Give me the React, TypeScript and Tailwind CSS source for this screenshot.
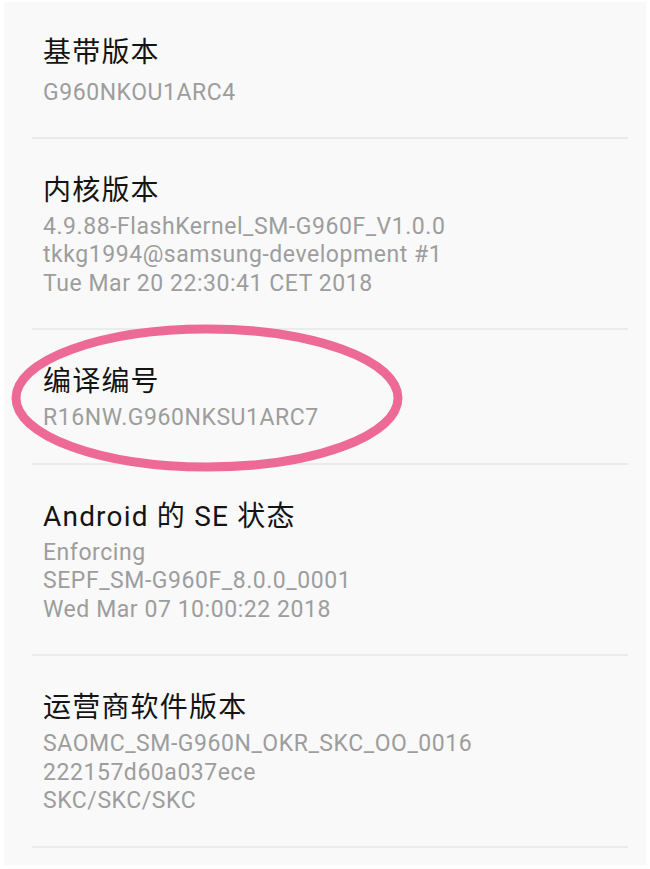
import React from "react";

type Item = { title: string; values: string[] };

const items: Item[] = [
  { title: "基带版本", values: ["G960NKOU1ARC4"] },
  {
    title: "内核版本",
    values: [
      "4.9.88-FlashKernel_SM-G960F_V1.0.0",
      "tkkg1994@samsung-development #1",
      "Tue Mar 20 22:30:41 CET 2018",
    ],
  },
  { title: "编译编号", values: ["R16NW.G960NKSU1ARC7"] },
  {
    title: "Android 的 SE 状态",
    values: ["Enforcing", "SEPF_SM-G960F_8.0.0_0001", "Wed Mar 07 10:00:22 2018"],
  },
  {
    title: "运营商软件版本",
    values: ["SAOMC_SM-G960N_OKR_SKC_OO_0016", "222157d60a037ece", "SKC/SKC/SKC"],
  },
];

export default function App() {
  return (
    <div
      className="w-[650px] h-[869px] bg-white overflow-hidden pt-[2px] px-[4px] pb-[4px]"
      style={{ fontFamily: 'Roboto, "Noto Sans CJK SC", sans-serif' }}
    >
      <div className="relative h-full bg-[#f9f9f9]">
        {items.map((it, i) => (
          <div key={i}>
            {i > 0 && <div className="ml-[28px] mr-[18px] h-[2px] bg-[#ebebeb]" />}
            <div className={`pl-[39px] ${i === 0 ? "pt-[33px] pb-[29px]" : "pt-[34px] pb-[30px]"}`}>
              <div className="text-[28px] leading-[36px] text-[#141414] tracking-[1.2px]">{it.title}</div>
              <div className={i === 0 ? "mt-[8px]" : "mt-[4px]"}>
                {it.values.map((v, j) => (
                  <div key={j} className="text-[23px] leading-[28.5px] text-[#9d9d9d] tracking-[0.55px]">
                    {v}
                  </div>
                ))}
              </div>
            </div>
          </div>
        ))}
        <div className="ml-[28px] mr-[18px] h-[2px] bg-[#ebebeb]" />
        <svg className="absolute left-[-4px] top-[-2px] pointer-events-none" width="650" height="869">
          <ellipse cx="207" cy="398" rx="191" ry="69" fill="none" stroke="#ec6a95" strokeWidth="9" />
        </svg>
      </div>
    </div>
  );
}
